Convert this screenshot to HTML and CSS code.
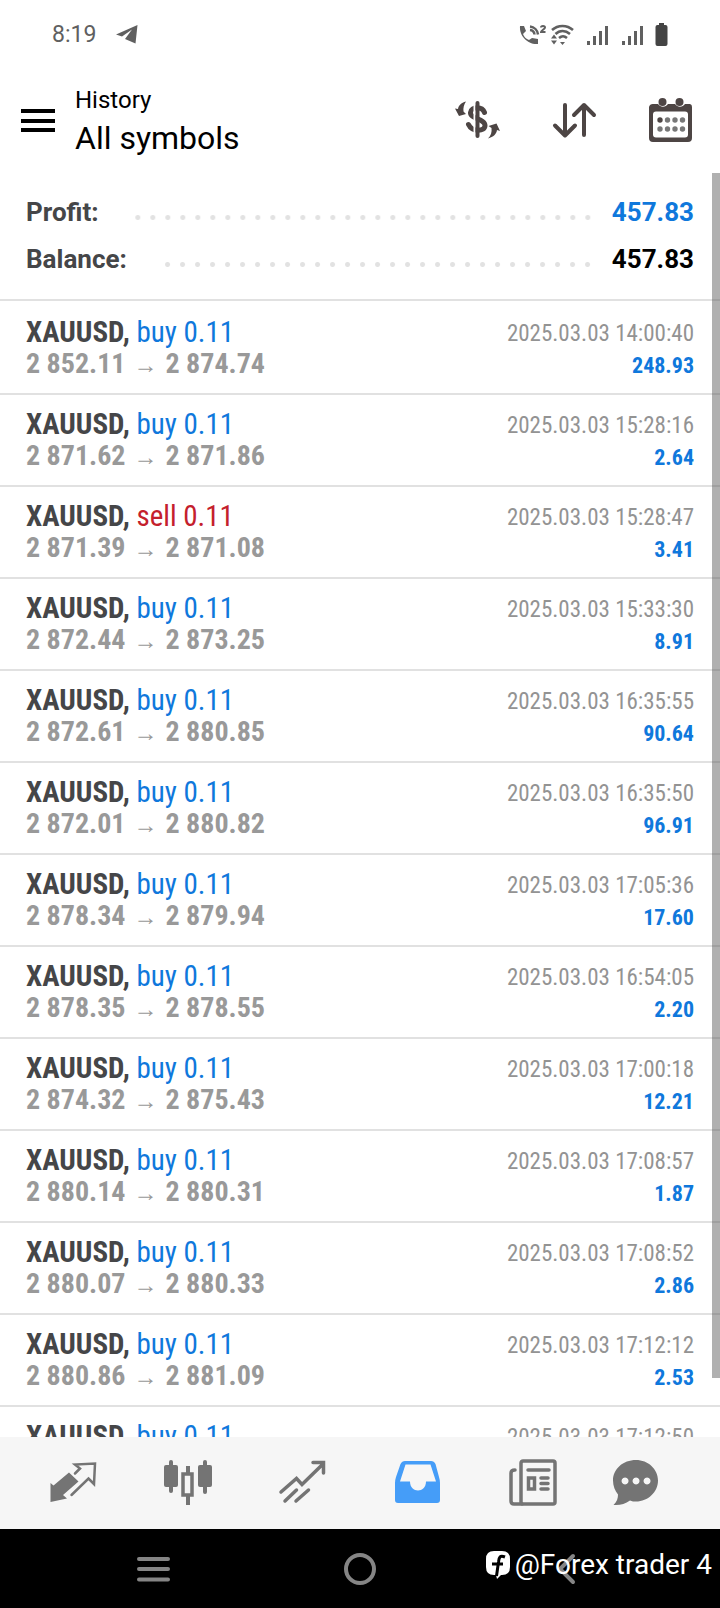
FILE: index.html
```
<!DOCTYPE html>
<html lang="en">
<head>
<meta charset="utf-8">
<meta name="viewport" content="width=device-width, initial-scale=1">
<title>History</title>
<link rel="stylesheet" href="styles.css">
</head>
<body>
<div class="status">
  <span class="clock">8:19</span>
  <svg class="telegram" width="22" height="20" viewBox="0 0 22 20"><path d="M0 9.500L21.500 0 19.500 18.500 9 14 16 4.500 6 11.500Z"/></svg>
  <div class="signals">
    <svg width="28" height="22" viewBox="0 0 28 22"><path d="M1 2h4l2 5-3 3c1 3 3 5 6 6l3-2 6 1v5C9 21 0 12 1 2z"/><path class="stroke" d="M11 6a5 5 0 0 1 4.500 4.500M11 2.500a9 9 0 0 1 8 8"/><path class="stroke thin" d="M22 3.500c0-2 4-2 4 0 0 1.500-4 3-4 4.500h4.500"/></svg>
    <svg width="23" height="22" viewBox="0 0 23 22"><path class="stroke" d="M1 6c6-5.500 15-5.500 21 0M4.500 10c4-4 10-4 14.500 0M8 14c3-2.500 5-2.500 8 0"/><path d="M0 14.500l3-4 3 4zM0 16.500l3 4 3-4zM9 18l2.500 3 2.500-3z"/></svg>
    <svg class="bars" width="22" height="20" viewBox="0 0 22 20"><path d="M0 16h3v4H0zM6 11h3v9H6zM12 6h3v14h-3zM18 1h3v19h-3z"/></svg>
    <svg class="bars" width="22" height="20" viewBox="0 0 22 20"><path d="M0 16h3v4H0zM6 11h3v9H6zM12 6h3v14h-3zM18 1h3v19h-3z"/></svg>
    <svg class="battery" width="12" height="23" viewBox="0 0 12 23"><path d="M3 0h5v2h1.500a2 2 0 0 1 2 2v17a2 2 0 0 1-2 2h-8a2 2 0 0 1-2-2V4a2 2 0 0 1 2-2H3z"/></svg>
  </div>
</div>

<header class="toolbar">
  <button class="menu" aria-label="Menu"><svg width="34" height="24" viewBox="0 0 34 24"><path d="M0 1h34v4H0zM0 11h34v4H0zM0 20h34v4H0z"/></svg></button>
  <div class="titles">
    <div class="kicker">History</div>
    <h1>All symbols</h1>
  </div>
  <div class="actions">
    <button aria-label="Currency"><svg width="46" height="46" viewBox="0 0 46 46">
      <path class="dollar" d="M30.500 15.500C28 9 17 9.500 16.500 15.500C16 22 31 21.500 31 28.500C31 35 18 35 14.500 27.500"/><path class="cut" d="M20.500 4v38"/><path class="pole" d="M23.500 6v33"/>
      <path d="M12 4.500C7 6 4.500 8.500 4 12L1 11.500 5 19 12 17 9.500 14.500C9 11 10 7.500 12 4.500zM34 41.500C39.500 40 42.500 37 43 33L46 34 42.500 26.500 34.500 29 37.500 31C38 35 37 38.500 34 41.500z"/>
    </svg></button>
    <button aria-label="Sort"><svg width="46" height="46" viewBox="0 0 46 46"><path class="line" d="M14 8v30M4 28.500L14 38.500 24 28.500M33 38V8M23 18L33 8l10 10"/></svg></button>
    <button aria-label="Period"><svg width="46" height="46" viewBox="0 0 46 46">
      <path fill-rule="evenodd" d="M5 7h5a6 6 0 0 0 10 0h7a6 6 0 0 0 10 0h5a3 3 0 0 1 2 3v31a4 4 0 0 1-4 4H5a4 4 0 0 1-4-4V10a4 4 0 0 1 4-3zM8 14.500a3 3 0 0 0-3 3v20a3 3 0 0 0 3 3h29a3 3 0 0 0 3-3v-20a3 3 0 0 0-3-3z"/>
      <circle cx="14.500" cy="5" r="4"/><circle cx="31.500" cy="5" r="4"/>
      <circle cx="12" cy="23" r="2.700"/><g class="days"><circle cx="19.500" cy="23" r="2.700"/><circle cx="27" cy="23" r="2.700"/><circle cx="34.500" cy="23" r="2.700"/><circle cx="12" cy="32" r="2.700"/><circle cx="19.500" cy="32" r="2.700"/><circle cx="27" cy="32" r="2.700"/><circle cx="34.500" cy="32" r="2.700"/></g>
    </svg></button>
  </div>
</header>

<main class="history">
  <section class="summary">
    <div class="total"><span class="name">Profit:</span><span class="dots"></span><span class="sum gain">457.83</span></div>
    <div class="total"><span class="name">Balance:</span><span class="dots"></span><span class="sum">457.83</span></div>
  </section>
  <ul class="deals">
    <li><div><p><b>XAUUSD,</b> <span class="buy">buy 0.11</span></p><p class="prices">2 852.11<i>→</i>2 874.74</p></div><div class="result"><time>2025.03.03 14:00:40</time><strong>248.93</strong></div></li>
    <li><div><p><b>XAUUSD,</b> <span class="buy">buy 0.11</span></p><p class="prices">2 871.62<i>→</i>2 871.86</p></div><div class="result"><time>2025.03.03 15:28:16</time><strong>2.64</strong></div></li>
    <li><div><p><b>XAUUSD,</b> <span class="sell">sell 0.11</span></p><p class="prices">2 871.39<i>→</i>2 871.08</p></div><div class="result"><time>2025.03.03 15:28:47</time><strong>3.41</strong></div></li>
    <li><div><p><b>XAUUSD,</b> <span class="buy">buy 0.11</span></p><p class="prices">2 872.44<i>→</i>2 873.25</p></div><div class="result"><time>2025.03.03 15:33:30</time><strong>8.91</strong></div></li>
    <li><div><p><b>XAUUSD,</b> <span class="buy">buy 0.11</span></p><p class="prices">2 872.61<i>→</i>2 880.85</p></div><div class="result"><time>2025.03.03 16:35:55</time><strong>90.64</strong></div></li>
    <li><div><p><b>XAUUSD,</b> <span class="buy">buy 0.11</span></p><p class="prices">2 872.01<i>→</i>2 880.82</p></div><div class="result"><time>2025.03.03 16:35:50</time><strong>96.91</strong></div></li>
    <li><div><p><b>XAUUSD,</b> <span class="buy">buy 0.11</span></p><p class="prices">2 878.34<i>→</i>2 879.94</p></div><div class="result"><time>2025.03.03 17:05:36</time><strong>17.60</strong></div></li>
    <li><div><p><b>XAUUSD,</b> <span class="buy">buy 0.11</span></p><p class="prices">2 878.35<i>→</i>2 878.55</p></div><div class="result"><time>2025.03.03 16:54:05</time><strong>2.20</strong></div></li>
    <li><div><p><b>XAUUSD,</b> <span class="buy">buy 0.11</span></p><p class="prices">2 874.32<i>→</i>2 875.43</p></div><div class="result"><time>2025.03.03 17:00:18</time><strong>12.21</strong></div></li>
    <li><div><p><b>XAUUSD,</b> <span class="buy">buy 0.11</span></p><p class="prices">2 880.14<i>→</i>2 880.31</p></div><div class="result"><time>2025.03.03 17:08:57</time><strong>1.87</strong></div></li>
    <li><div><p><b>XAUUSD,</b> <span class="buy">buy 0.11</span></p><p class="prices">2 880.07<i>→</i>2 880.33</p></div><div class="result"><time>2025.03.03 17:08:52</time><strong>2.86</strong></div></li>
    <li><div><p><b>XAUUSD,</b> <span class="buy">buy 0.11</span></p><p class="prices">2 880.86<i>→</i>2 881.09</p></div><div class="result"><time>2025.03.03 17:12:12</time><strong>2.53</strong></div></li>
    <li><div><p><b>XAUUSD,</b> <span class="buy">buy 0.11</span></p></div><div class="result"><time>2025.03.03 17:12:50</time></div></li>
  </ul>
  <div class="scrollbar"></div>
</main>

<nav class="tabs">
  <button aria-label="Quotes"><svg width="48" height="48" viewBox="0 0 48 48"><path d="M1.500 24l3 2.500L20 13.500l9.500 9L14 36l4 3.500-16.500 3.500z"/><path class="ink fine" d="M26 14.500L31 9.500 26 5.500 46 4.500 45 25 39.500 19.500 22.500 36"/></svg></button>
  <button aria-label="Charts"><svg width="48" height="48" viewBox="0 0 48 48"><rect x="0" y="6" width="14" height="22" rx="2"/><rect x="5" y="1" width="4" height="33" rx="2"/><rect x="34" y="6" width="14" height="22" rx="2"/><rect x="39" y="1" width="4" height="34" rx="2"/><path class="ink" d="M19 15h9v21h-9z"/><path d="M22 7h4v8h-4zM22 37h4v9h-4z"/></svg></button>
  <button aria-label="Trade"><svg width="48" height="48" viewBox="0 0 48 48"><path class="ink" d="M2 33L17.500 19.500 23 25.500 44 5M34 3.500H44.500V14M6 42L17.500 31M17 42L29.500 31"/></svg></button>
  <button class="active" aria-label="History"><svg width="48" height="48" viewBox="0 0 48 48"><path fill-rule="evenodd" d="M11 2h26c2 0 3.500 1 4.500 3L45 18q1 3 1 6v17a3 3 0 0 1-3 3H4a3 3 0 0 1-3-3V24q0-3 1-6L6.500 5C7.500 3 9 2 11 2zM11.500 5.500L6 22.500h10c0 12 16 12 16 0h10L36.500 5.500z"/></svg></button>
  <button aria-label="News"><svg width="48" height="48" viewBox="0 0 48 48"><rect class="ink" x="12" y="2" width="34" height="43" rx="2"/><path class="ink" d="M6 11c-3 0-4 1-4 3v28q0 3 3 3h8M19 11h21M32 19h7M32 24.500h7M32 30h7M19.500 19h6v11h-6z"/></svg></button>
  <button aria-label="Messages"><svg width="48" height="48" viewBox="0 0 48 48"><path fill-rule="evenodd" d="M24 1C36 1 46 10 46 21.500S36 42.500 24 42.500c-2 0-4 0-6-1C13 45 8 46.500 1.500 46 5 43 6 39 6 35.500 3 32 1 27 1 21.500 1 10 11 1 24 1zM13 18.500a3.500 3.500 0 1 0 .1 0zM24 18.500a3.500 3.500 0 1 0 .1 0zM35 18.500a3.500 3.500 0 1 0 .1 0z"/></svg></button>
</nav>

<footer class="system">
  <button aria-label="Recent apps"><svg width="34" height="30" viewBox="0 0 34 30"><path d="M3 5h29M3 15h29M3 25.500h29"/></svg></button>
  <button aria-label="Home"><svg width="34" height="34" viewBox="0 0 34 34"><circle cx="17" cy="17" r="14"/></svg></button>
  <button aria-label="Back"><svg width="34" height="34" viewBox="0 0 34 34"><path d="M23 4L10 17l13 13"/></svg></button>
  <div class="credit">
    <svg width="26" height="30" viewBox="0 0 26 30"><path class="badge" d="M9 1h8q8 0 8 8v8q0 8-8 8h-1l-4 4-1-4H9q-8 0-8-8V9q0-8 8-8z"/><path class="mark" d="M20 7c-5-2-6 0-6.500 5L11.500 26M7 14h11"/></svg>
    <span>@Forex trader 4</span>
  </div>
</footer>
</body>
</html>
```
FILE: styles.css
```
* { box-sizing: border-box; }
body {
  margin: 0;
  height: 100vh;
  display: flex;
  flex-direction: column;
  overflow: hidden;
  background: #fff;
  color: #000;
  font-family: Roboto, "Liberation Sans", sans-serif;
}
button { display: flex; align-items: center; justify-content: center; padding: 0; border: 0; background: none; color: inherit; }
svg { display: block; flex: none; overflow: visible; fill: currentColor; }
p, h1, ul { margin: 0; padding: 0; }

.status { display: flex; align-items: center; height: 69px; padding: 0 52px; color: #606060; }
.clock { font-size: 23px; line-height: 28px; }
.telegram { margin-left: 20px; }
.signals { display: flex; align-items: center; margin-left: auto; gap: 4px; }
.signals .stroke { fill: none; stroke: currentColor; stroke-width: 2.500; }
.signals .thin { stroke-width: 2; }
.bars { margin-left: 9px; }
.battery { margin-left: 8px; color: #444; }

.toolbar { display: flex; align-items: center; height: 104px; padding: 0 26px 2px 21px; }
.titles { margin-left: 20px; }
.kicker { font-size: 24px; line-height: 36px; }
h1 { font-size: 32px; line-height: 40px; font-weight: 400; }
.actions { display: flex; gap: 51px; margin-left: auto; color: #4d4544; }
.actions .dollar, .actions .pole, .actions .line { fill: none; stroke: currentColor; stroke-width: 4; stroke-linecap: round; stroke-linejoin: round; }
.actions .dollar { stroke-width: 5; }
.actions .cut { stroke: #fff; stroke-width: 2; }
.days { fill: #777; }

.history { position: relative; flex: 1; min-height: 0; overflow: hidden; }
.summary { padding: 15px 26px 17px; border-bottom: 2px solid #e1e1e1; }
.total { display: flex; align-items: center; height: 47px; font-size: 26px; font-weight: 700; }
.name { color: #454648; }
.dots { flex: 1; height: 5px; margin: 11px 17px 0 34px; background: radial-gradient(circle, #e2e2e2 2px, transparent 3px) right center / 15px 5px repeat-x; }
.gain { color: #0f78dc; }

.deals { list-style: none; padding-top: 2px; font-family: "Roboto Condensed", Roboto, sans-serif; font-size: 29px; line-height: 32px; }
.deals li { display: flex; justify-content: space-between; padding: 13px 26px; border-bottom: 2px solid #e1e1e1; }
.deals b { color: #454648; }
.buy { color: #0f78dc; }
.sell { color: #c4202c; }
.prices { font-size: 28px; color: #999; font-weight: 700; }
.prices i { margin: 0 8px; font: 400 24px/24px Roboto, sans-serif; }
.result { display: flex; flex-direction: column; align-items: flex-end; margin: 2px 0 -2px; font-size: 22px; }
.result time { font-size: 23px; color: #939393; }
.result strong { color: #0f78dc; }
.scrollbar { position: absolute; top: 0; right: 0; width: 8px; height: 95.3%; background: rgba(80, 80, 80, 0.45); }

.tabs { display: grid; grid-template-columns: repeat(5, 5fr) 4fr; height: 92px; padding: 0 38px 0 15px; background: #f6f6f6; color: #747474; }
.tabs .ink { fill: none; stroke: currentColor; stroke-width: 3.500; stroke-linecap: round; }
.tabs .fine { stroke-width: 2.500; }
.tabs .active { color: #459df8; }

.system { position: relative; display: grid; grid-template-columns: 1fr 1fr 1fr; height: 79px; padding: 0 50px; background: #000; color: #858585; }
.system button svg { fill: none; stroke: currentColor; stroke-width: 4; stroke-linecap: round; }
.credit { position: absolute; right: 8px; top: 19px; display: flex; align-items: center; gap: 4px; color: #fff; font-size: 28px; line-height: 34px; }
.credit .mark { fill: none; stroke: #000; stroke-width: 3; }
```
